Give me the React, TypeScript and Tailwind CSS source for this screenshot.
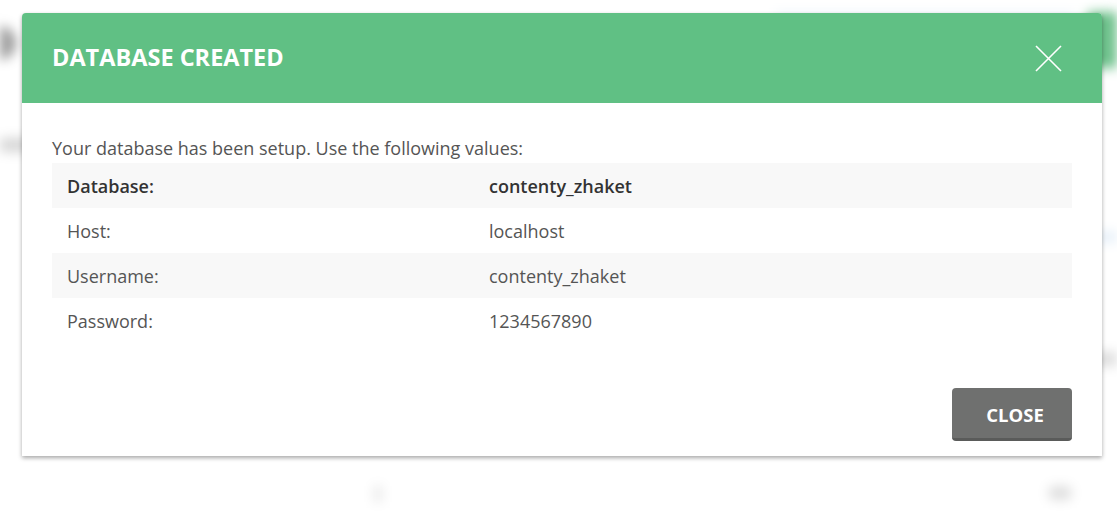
const rows = [
  { label: "Database:", value: "contenty_zhaket", bold: true },
  { label: "Host:", value: "localhost" },
  { label: "Username:", value: "contenty_zhaket" },
  { label: "Password:", value: "1234567890" },
];

function Backdrop() {
  // blurred page that sits behind the dialog
  return (
    <div className="h-[522px] w-full overflow-hidden bg-white blur-[6px]">
      <div className="flex items-start justify-between">
        <div className="ml-[-18px] mt-[26px] h-[34px] w-[34px] rounded-full bg-[#9a9a9a]" />
        <div className="mt-[12px] flex items-start gap-[12px]">
          <div className="h-[10px] w-[300px] rounded bg-[#eef5fb]" />
          <div className="mr-[-30px] h-[56px] w-[60px] rounded bg-[#6cc08a]" />
        </div>
      </div>
      <div className="mt-[70px] h-[14px] w-[40px] bg-[#d6d6d6]" />
      <div className="mt-[80px] flex justify-end">
        <div className="h-[10px] w-[20px] bg-[#e3eef8]" />
      </div>
      <div className="mt-[110px] flex justify-end">
        <div className="h-[14px] w-[24px] bg-[#dcdcdc]" />
      </div>
      <div className="mt-[120px] flex justify-between pl-[375px] pr-[45px]">
        <div className="h-[16px] w-[6px] bg-[#e0e0e0]" />
        <div className="h-[14px] w-[24px] rounded-full bg-[#dedede]" />
      </div>
    </div>
  );
}

export default function App() {
  return (
    <div
      className="relative h-[522px] w-[1117px] overflow-hidden bg-white"
      style={{ fontFamily: '"Open Sans", "Noto Sans", sans-serif' }}
    >
      <Backdrop />

      <div className="absolute left-[22px] top-[13px] w-[1080px] overflow-hidden rounded-t-[4px] bg-white shadow-[0_2px_4px_rgba(0,0,0,0.35)]">
        <div className="flex h-[90px] items-center justify-between bg-[#60c084] pl-[30px] pr-[40px]">
          <h2 className="text-[23.5px] font-bold text-white">DATABASE CREATED</h2>
          <svg width="27" height="27" viewBox="0 0 27 27" className="text-white">
            <path d="M1 1 L26 26 M26 1 L1 26" stroke="currentColor" strokeWidth="1.6" fill="none" />
          </svg>
        </div>

        <div className="px-[30px] pt-[32px]">
          <p className="mb-[2px] text-[18px] leading-[26px] text-[#555]">
            Your database has been setup. Use the following values:
          </p>
          <div className="flex flex-col">
            {rows.map((r, i) => (
              <div
                key={r.label}
                className={`flex h-[45px] items-center pt-[1px] text-[18px] ${
                  i % 2 === 0 ? "bg-[#f8f8f8]" : "bg-white"
                } ${r.bold ? "font-semibold text-[#333]" : "text-[#555]"}`}
              >
                <div className="w-[437px] pl-[15px]">{r.label}</div>
                <div>{r.value}</div>
              </div>
            ))}
          </div>
        </div>

        <div className="flex justify-end px-[30px] pb-[15px] pt-[45px]">
          <button className="h-[53px] w-[120px] rounded-[4px] border-b-[3px] border-[#5a5b5a] bg-[#6f706f] pl-[6px] pt-[3px] text-[18.5px] font-bold text-white">
            CLOSE
          </button>
        </div>
      </div>
    </div>
  );
}
